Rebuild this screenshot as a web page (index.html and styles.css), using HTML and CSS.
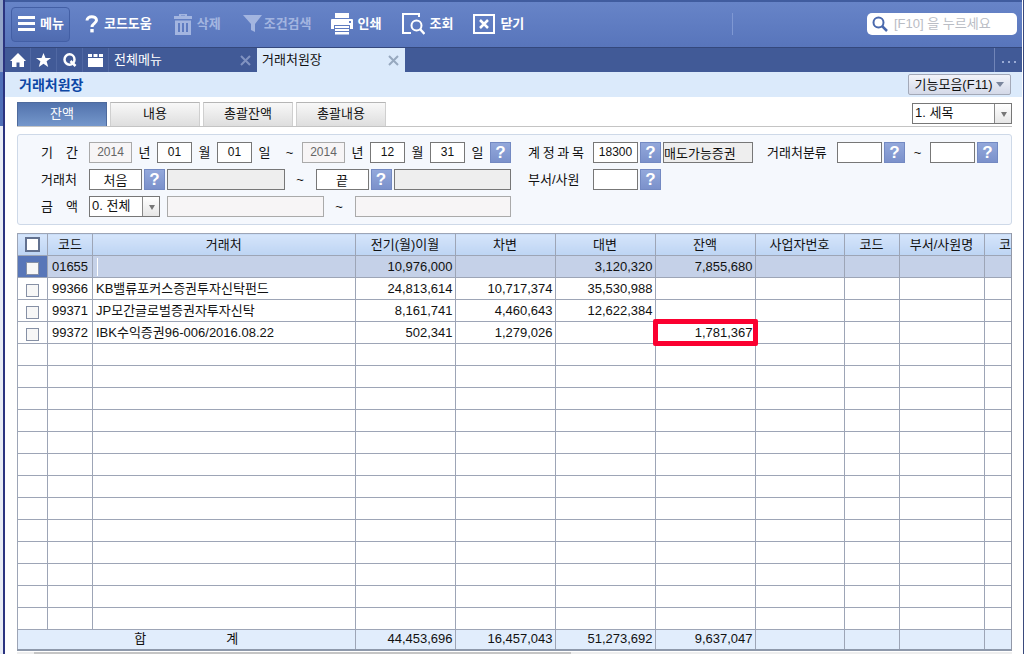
FILE: index.html
```
<!DOCTYPE html>
<html lang="ko">
<head>
    <meta charset="UTF-8">
    <meta name="viewport" content="width=device-width, initial-scale=1.0">
    <title>거래처원장</title>
    <link rel="stylesheet" href="styles.css">
</head>
<body>

    <div class="app">
        <!-- Toolbar -->
        <header class="toolbar">
            <button class="tool-btn menu-btn" type="button">
                <svg width="17" height="16" viewBox="0 0 17 16"><path d="M0 0h17v3H0zM0 6h17v3H0zM0 12h17v3H0z" fill="#fff"/></svg>
                메뉴
            </button>
            <button class="tool-btn help-tool" type="button">
                <svg width="14" height="18" viewBox="0 0 14 18"><path d="M2 5.5C2 0.5 11.5 0.5 11.5 5.3C11.5 8.3 7 8.5 7 12" fill="none" stroke="#fff" stroke-width="3"/><path d="M5.3 14h3.4v3.4H5.3z" fill="#fff"/></svg>
                코드도움
            </button>
            <button class="tool-btn delete-tool" type="button" disabled>
                <svg width="18" height="21" viewBox="0 0 18 21"><path d="M0 2h5V0h8v2h5v3H0zM7 1.5V2h4v-.5zM1 6.500h16V21H1zM4 9v9h2V9zM8 9v9h2V9zM12 9v9h2V9z" fill="#a3b5e0" fill-rule="evenodd"/></svg>
                삭제
            </button>
            <button class="tool-btn filter-tool" type="button" disabled>
                <svg width="19" height="18" viewBox="0 0 19 18"><path d="M0 0h19l-7 9v8l-4-2V9z" fill="#a3b5e0"/></svg>
                조건검색
            </button>
            <button class="tool-btn print-tool" type="button">
                <svg width="22" height="22" viewBox="0 0 22 22"><path d="M4 0h14v5H4zM1 6h20a1 1 0 0 1 1 1v9h-3v-4H3v4H0V7a1 1 0 0 1 1-1zM4 13h14v2H4zM4 16h14v2H4zM4 19h14v2.500H4z" fill="#fff"/><path d="M18 8h2v2h-2z" fill="#5f7cc2"/></svg>
                인쇄
            </button>
            <button class="tool-btn view-tool" type="button">
                <svg width="23" height="22" viewBox="0 0 23 22"><path d="M17 4V1H1v19h8" fill="none" stroke="#fff" stroke-width="2"/><circle cx="14.500" cy="12.500" r="5" fill="none" stroke="#fff" stroke-width="2"/><path d="M18 16l4.500 5" stroke="#fff" stroke-width="2.500"/></svg>
                조회
            </button>
            <button class="tool-btn close-tool" type="button">
                <svg width="22" height="20" viewBox="0 0 22 20"><path d="M1 1h20v18H1z" fill="none" stroke="#fff" stroke-width="2"/><path d="M7 6l8 8M15 6l-8 8" stroke="#fff" stroke-width="2.500"/></svg>
                닫기
            </button>
            <div class="search-area">
                <label class="search">
                    <svg width="16" height="16" viewBox="0 0 16 16"><circle cx="6.500" cy="6.500" r="5" fill="none" stroke="#4a69ad" stroke-width="2"/><path d="M10 10l5 5" stroke="#4a69ad" stroke-width="2.500"/></svg>
                    <input type="text" placeholder="[F10] 을 누르세요" aria-label="메뉴 검색">
                </label>
            </div>
        </header>

        <!-- Window tabs -->
        <nav class="tabs">
            <button class="tab-icon" type="button" aria-label="홈"><svg width="16" height="15" viewBox="0 0 16 15"><path d="M8 0l8 8h-2v6H9.500V9.500h-3V14H2V8H0z" fill="#fff"/></svg></button>
            <button class="tab-icon" type="button" aria-label="즐겨찾기"><svg width="15" height="14" viewBox="0 0 15 14"><path d="M7.500 0l2 5H15l-4.400 3.300L12.200 14 7.500 10.700 2.800 14l1.600-5.700L0 5h5.500z" fill="#fff"/></svg></button>
            <button class="tab-icon" type="button" aria-label="빠른 찾기"><svg width="14" height="14" viewBox="0 0 14 14"><ellipse cx="6.500" cy="6.500" rx="5" ry="5.200" fill="none" stroke="#fff" stroke-width="2.500"/><path d="M7.500 8l5 5" stroke="#fff" stroke-width="2.500"/></svg></button>
            <button class="tab-icon" type="button" aria-label="창 목록"><svg width="15" height="13" viewBox="0 0 15 13"><path d="M0 0h4v3H0zM5.500 0h4v3h-4zM11 0h4v3h-4zM0 4h15v9H0z" fill="#fff"/></svg></button>
            <div class="tab">
                <a href="#">전체메뉴</a>
                <button class="tab-close" type="button" aria-label="전체메뉴 닫기"><svg width="11" height="11" viewBox="0 0 11 11"><path d="M1 1l9 9M10 1l-9 9" stroke="currentColor" stroke-width="2"/></svg></button>
            </div>
            <div class="tab active">
                <a href="#">거래처원장</a>
                <button class="tab-close" type="button" aria-label="거래처원장 닫기"><svg width="11" height="11" viewBox="0 0 11 11"><path d="M1 1l9 9M10 1l-9 9" stroke="currentColor" stroke-width="2"/></svg></button>
            </div>
            <button class="tab-more" type="button" aria-label="더보기"><svg width="14" height="3" viewBox="0 0 14 3"><path d="M0 0h2v2H0zM6 0h2v2H6zM12 0h2v2h-2z" fill="#9aabd4"/></svg></button>
        </nav>

        <div class="title-bar">
            <h1>거래처원장</h1>
            <button class="function-btn" type="button">기능모음(F11) <span class="arrow"></span></button>
        </div>

        <main class="content">
            <div class="sub-tabs">
                <button class="sub-tab selected" type="button">잔액</button>
                <button class="sub-tab" type="button">내용</button>
                <button class="sub-tab" type="button">총괄잔액</button>
                <button class="sub-tab" type="button">총괄내용</button>
                <div class="select item-select">
                    <select aria-label="세목"><option>1. 세목</option></select>
                </div>
            </div>

            <!-- Search conditions -->
            <form class="filter">
                <div class="filter-row">
                    <label class="label" for="year1"><span>기</span><span>간</span></label>
                    <div class="range">
                        <input class="year" id="year1" type="text" value="2014" disabled>
                        <label class="unit" for="year1">년</label>
                        <input class="day" id="month1" type="text" value="01">
                        <label class="unit" for="month1">월</label>
                        <input class="day" id="day1" type="text" value="01">
                        <label class="unit" for="day1">일</label>
                        <span class="unit">~</span>
                        <input class="year" id="year2" type="text" value="2014" disabled>
                        <label class="unit" for="year2">년</label>
                        <input class="day" id="month2" type="text" value="12">
                        <label class="unit" for="month2">월</label>
                        <input class="day" id="day2" type="text" value="31">
                        <label class="unit" for="day2">일</label>
                        <button class="help-btn" type="button">?</button>
                    </div>
                    <label class="label account" for="account"><span>계</span><span>정</span><span>과</span><span>목</span></label>
                    <div class="fields">
                        <input class="code" id="account" type="text" value="18300">
                        <button class="help-btn" type="button">?</button>
                        <input class="account-name" type="text" value="매도가능증권" aria-label="계정과목명" readonly>
                    </div>
                    <label class="label kind" for="kind1">거래처분류</label>
                    <div class="fields">
                        <input class="code" id="kind1" type="text">
                        <button class="help-btn" type="button">?</button>
                    </div>
                    <span class="unit">~</span>
                    <div class="fields">
                        <input class="code" type="text" aria-label="거래처분류 끝">
                        <button class="help-btn" type="button">?</button>
                    </div>
                </div>
                <div class="filter-row">
                    <label class="label" for="client1">거래처</label>
                    <div class="range">
                        <div class="fields grow">
                            <input class="client" id="client1" type="text" value="처음">
                            <button class="help-btn" type="button">?</button>
                            <input class="name" type="text" aria-label="처음 거래처명" readonly>
                        </div>
                        <span class="tilde">~</span>
                        <div class="fields grow">
                            <input class="client" type="text" value="끝" aria-label="끝 거래처">
                            <button class="help-btn" type="button">?</button>
                            <input class="name" type="text" aria-label="끝 거래처명" readonly>
                        </div>
                    </div>
                    <label class="label account" for="dept">부서/사원</label>
                    <div class="fields">
                        <input class="code" id="dept" type="text">
                        <button class="help-btn" type="button">?</button>
                    </div>
                </div>
                <div class="filter-row">
                    <label class="label" for="amount"><span>금</span><span>액</span></label>
                    <div class="range">
                        <div class="select amount-select">
                            <select id="amount"><option>0. 전체</option></select>
                        </div>
                        <input class="amount" type="text" aria-label="금액 시작" disabled>
                        <span class="tilde">~</span>
                        <input class="amount" type="text" aria-label="금액 끝" disabled>
                    </div>
                </div>
            </form>

            <!-- Ledger -->
            <div class="grid">
                <table>
                    <colgroup>
                        <col class="col-check"><col class="col-code"><col>
                        <col class="col-money"><col class="col-money"><col class="col-money"><col class="col-money">
                        <col class="col-number"><col class="col-short"><col class="col-dept"><col class="col-last">
                    </colgroup>
                    <thead>
                        <tr>
                            <th><input type="checkbox" aria-label="전체 선택"></th>
                            <th>코드</th><th>거래처</th><th>전기(월)이월</th><th>차변</th><th>대변</th><th>잔액</th>
                            <th>사업자번호</th><th>코드</th><th>부서/사원명</th><th class="last">코</th>
                        </tr>
                    </thead>
                    <tbody>
                        <tr class="current">
                            <td class="check"><input type="checkbox" aria-label="01655"></td>
                            <td class="center">01655</td><td><span class="caret"></span></td>
                            <td class="money">10,976,000</td><td></td><td class="money">3,120,320</td><td class="money">7,855,680</td>
                            <td></td><td></td><td></td><td></td>
                        </tr>
                        <tr>
                            <td class="check"><input type="checkbox" aria-label="99366"></td>
                            <td class="center">99366</td><td>KB밸류포커스증권투자신탁펀드</td>
                            <td class="money">24,813,614</td><td class="money">10,717,374</td><td class="money">35,530,988</td><td></td>
                            <td></td><td></td><td></td><td></td>
                        </tr>
                        <tr>
                            <td class="check"><input type="checkbox" aria-label="99371"></td>
                            <td class="center">99371</td><td>JP모간글로벌증권자투자신탁</td>
                            <td class="money">8,161,741</td><td class="money">4,460,643</td><td class="money">12,622,384</td><td></td>
                            <td></td><td></td><td></td><td></td>
                        </tr>
                        <tr>
                            <td class="check"><input type="checkbox" aria-label="99372"></td>
                            <td class="center">99372</td><td>IBK수익증권96-006/2016.08.22</td>
                            <td class="money">502,341</td><td class="money">1,279,026</td><td></td><td class="money marked">1,781,367</td>
                            <td></td><td></td><td></td><td></td>
                        </tr>
                        <tr><td></td><td></td><td></td><td></td><td></td><td></td><td></td><td></td><td></td><td></td><td></td></tr>
                        <tr><td></td><td></td><td></td><td></td><td></td><td></td><td></td><td></td><td></td><td></td><td></td></tr>
                        <tr><td></td><td></td><td></td><td></td><td></td><td></td><td></td><td></td><td></td><td></td><td></td></tr>
                        <tr><td></td><td></td><td></td><td></td><td></td><td></td><td></td><td></td><td></td><td></td><td></td></tr>
                        <tr><td></td><td></td><td></td><td></td><td></td><td></td><td></td><td></td><td></td><td></td><td></td></tr>
                        <tr><td></td><td></td><td></td><td></td><td></td><td></td><td></td><td></td><td></td><td></td><td></td></tr>
                        <tr><td></td><td></td><td></td><td></td><td></td><td></td><td></td><td></td><td></td><td></td><td></td></tr>
                        <tr><td></td><td></td><td></td><td></td><td></td><td></td><td></td><td></td><td></td><td></td><td></td></tr>
                        <tr><td></td><td></td><td></td><td></td><td></td><td></td><td></td><td></td><td></td><td></td><td></td></tr>
                        <tr><td></td><td></td><td></td><td></td><td></td><td></td><td></td><td></td><td></td><td></td><td></td></tr>
                        <tr><td></td><td></td><td></td><td></td><td></td><td></td><td></td><td></td><td></td><td></td><td></td></tr>
                        <tr><td></td><td></td><td></td><td></td><td></td><td></td><td></td><td></td><td></td><td></td><td></td></tr>
                        <tr><td></td><td></td><td></td><td></td><td></td><td></td><td></td><td></td><td></td><td></td><td></td></tr>
                    </tbody>
                    <tfoot>
                        <tr>
                            <td colspan="3"><div class="total"><span>합</span><span>계</span></div></td>
                            <td class="money">44,453,696</td><td class="money">16,457,043</td><td class="money">51,273,692</td><td class="money">9,637,047</td>
                            <td></td><td></td><td></td><td></td>
                        </tr>
                    </tfoot>
                </table>
            </div>
            <div class="scroll-track"><div class="scroll-thumb"></div></div>
        </main>
    </div>

</body>
</html>
```
FILE: styles.css
```
* {
    box-sizing: border-box;
}

body {
    margin: 0;
    font-family: "Liberation Sans", "Noto Sans CJK KR", sans-serif;
    font-size: 13px;
    line-height: 16px;
    color: #111;
    background: #fff;
    overflow: hidden;
}

button, input, select {
    font: inherit;
    color: inherit;
    margin: 0;
    padding: 0;
    border-radius: 0;
}

button {
    border: none;
    background: none;
    white-space: nowrap;
}

svg {
    display: block;
    flex: none;
}

/* The strip on the left is the edge of the window behind */
.app {
    min-height: 100vh;
    padding: 0 2px 0 5px;
    background:
        linear-gradient(#3a4a7c, #3a4a7c) right / 1px 100% no-repeat,
        linear-gradient(#2b3480, #2b3480) 3px 0 / 2px 100% no-repeat,
        linear-gradient(#93a5c9 72px, #5070b8 72px, #5070b8 126px, #e9edf6 126px) left / 3px 100% no-repeat,
        #fff;
}

/* Toolbar */
.toolbar {
    display: flex;
    align-items: center;
    height: 48px;
    padding: 0 5px 1px 6px;
    color: #fff;
    font-weight: bold;
    background: linear-gradient(#6784c8, #5875bb);
    border-top: 2px solid #405c9f;
    border-bottom: 1px solid #34487c;
}

.tool-btn {
    display: flex;
    align-items: center;
    gap: 5px;
}

.tool-btn:disabled {
    color: #a3b5e0;
}

.menu-btn {
    height: 35px;
    padding: 0 5px 0 6px;
    border: 1px solid #435fa5;
    border-radius: 4px;
    background: linear-gradient(#6280c5, #4f6bb0);
}

.help-tool { margin-left: 15px; }
.delete-tool { margin-left: 22px; }
.filter-tool { margin-left: 22px; gap: 2px; }
.print-tool { margin-left: 19px; }
.view-tool { margin-left: 21px; gap: 4px; }
.close-tool { margin-left: 20px; }

.search-area {
    display: flex;
    align-items: center;
    justify-content: flex-end;
    width: 285px;
    height: 22px;
    margin-left: auto;
    border-left: 1px solid #7f98d3;
}

.search {
    display: flex;
    align-items: center;
    gap: 6px;
    width: 150px;
    height: 22px;
    padding: 0 5px;
    background: #fff;
    border-radius: 5px;
}

.search input {
    width: 100%;
    min-width: 0;
    border: none;
    outline: none;
    background: none;
    font-weight: normal;
    color: #333;
}

.search input::placeholder {
    color: #b9bcc4;
}

/* Window tabs */
.tabs {
    display: flex;
    height: 24px;
    background: #415a97;
}

.tab-icon {
    display: flex;
    align-items: center;
    justify-content: center;
    width: 26px;
    border-right: 1px solid #5068a3;
}

.tab {
    display: flex;
    align-items: center;
    justify-content: space-between;
    width: 148px;
    padding: 0 6px 0 5px;
    color: #fff;
}

.tab a {
    color: inherit;
    text-decoration: none;
}

.tab-close {
    color: #8193c1;
}

.tab.active {
    color: #111;
    background: #dbeafb;
}

.tab.active .tab-close {
    color: #97a9bf;
}

.tab-more {
    display: flex;
    align-items: center;
    justify-content: center;
    width: 28px;
    margin-left: auto;
    padding-top: 4px;
    border-left: 1px solid #7185b8;
}

.title-bar {
    display: flex;
    align-items: center;
    justify-content: space-between;
    height: 25px;
    padding: 0 11px 0 14px;
    background: #dbeafb;
}

h1 {
    margin: 0;
    font-size: 14px;
    line-height: 18px;
    color: #0d47a5;
}

.function-btn {
    display: flex;
    align-items: center;
    justify-content: center;
    gap: 4px;
    width: 103px;
    height: 21px;
    border: 1px solid #a3a9b8;
    border-radius: 2px;
    background: linear-gradient(#f2f4fa, #d4d9e8);
}

.arrow {
    border: 4px solid transparent;
    border-top: 5px solid #7a859c;
    border-bottom: none;
}

/* Content */
.content {
    padding: 5px 10px 0 12px;
}

.sub-tabs {
    display: flex;
    gap: 3px;
    height: 25px;
    border-bottom: 1px solid #c4c4c4;
}

.sub-tab {
    width: 90px;
    padding-bottom: 2px;
    border: 1px solid #cfcfcf;
    border-top-color: #b5b5b5;
    border-bottom: none;
    background: linear-gradient(#f8f8f8, #dedede);
}

.sub-tab.selected {
    color: #fff;
    border-color: #4e6a9c;
    background: linear-gradient(#5273ad, #7597cb);
}

.select {
    position: relative;
    height: 21px;
}

.select select {
    display: block;
    width: 100%;
    height: 100%;
    padding: 0 18px 2px 2px;
    border: 1px solid #777;
    background: #fff;
    appearance: none;
}

/* Drop-down button drawn over the right end of the select */
.select::before {
    content: "";
    position: absolute;
    top: 1px;
    right: 1px;
    bottom: 1px;
    width: 16px;
    border-left: 1px solid #888;
    background: linear-gradient(#fff, #e6e6e6);
    pointer-events: none;
}

.select::after {
    content: "";
    position: absolute;
    top: 9px;
    right: 5px;
    border: 3px solid transparent;
    border-top: 5px solid #777;
    border-bottom: none;
    pointer-events: none;
}

.item-select {
    width: 100px;
    margin: 1px 0 0 auto;
}

/* Search conditions */
.filter {
    display: flex;
    flex-direction: column;
    gap: 6px;
    margin: 7px 0 8px;
    padding: 7px 0 7px 23px;
    border: 1px solid #ced9e8;
    border-radius: 3px;
    background: #f5f8fd;
}

.filter-row {
    display: flex;
    align-items: center;
    height: 21px;
}

.label {
    display: flex;
    justify-content: space-between;
    width: 48px;
    padding-right: 11px;
    white-space: nowrap;
}

.label.account {
    width: 82px;
    padding: 0 9px 0 17px;
}

.label.kind {
    width: 84px;
    padding: 0 0 0 14px;
}

.range {
    display: flex;
    align-items: center;
    width: 422px;
}

.fields {
    display: flex;
    gap: 2px;
}

.grow {
    flex: 1;
    min-width: 0;
}

.unit {
    width: 25px;
    text-align: center;
}

.tilde {
    width: 31px;
    text-align: center;
}

.filter input {
    height: 21px;
    min-width: 0;
    padding-bottom: 1px;
    border: 1px solid #777;
    background: #fff;
    text-align: center;
}

.filter input:read-only {
    background: #eee;
}

.filter input:disabled {
    color: #666;
    border-color: #aaa;
    background: #f7f5f6;
}

.filter .year,
.filter .day,
.filter .code {
    font-size: 12px;
}

.filter .year { width: 43px; }
.filter .day { width: 35px; }
.filter .code { width: 45px; }
.filter .client { width: 53px; }
.filter .name { flex: 1; }
.filter .amount { flex: 1; }

.filter .account-name {
    width: 90px;
    text-align: left;
}

.amount-select {
    width: 71px;
    margin-right: 7px;
}

.help-btn {
    width: 21px;
    height: 21px;
    font-size: 17px;
    line-height: 19px;
    font-weight: bold;
    color: #fff;
    border: 1px solid #7389c2;
    background: linear-gradient(#93a8db, #7b91cb);
}

/* Ledger */
.grid {
    overflow: hidden;
    border-right: 1px solid #9298a8;
}

table {
    width: 100%;
    table-layout: fixed;
    border-collapse: collapse;
}

.col-check { width: 30px; }
.col-code { width: 45px; }
.col-money { width: 100px; }
.col-number { width: 89px; }
.col-short { width: 55px; }
.col-dept { width: 85px; }
.col-last { width: 27px; }

th, td {
    height: 22px;
    padding: 0 3px;
    border: 1px solid #9da5b6;
    white-space: nowrap;
}

th {
    font-weight: normal;
    padding: 0;
    background: linear-gradient(#d5e5fb, #bdd4f3);
}

th.last {
    text-align: right;
}

th:last-child, td:last-child {
    border-right: none;
}

.center {
    text-align: center;
    padding: 0;
}

.money {
    text-align: right;
    padding-right: 2px;
}

.check {
    padding: 3px 0 0;
    text-align: center;
}

.grid input {
    display: block;
    width: 13px;
    height: 13px;
    margin: 0 auto;
    border: 1px solid #8690a5;
    background: #f7f7f7;
    appearance: none;
}

.grid th input {
    width: 15px;
    height: 15px;
    border: 2px solid #62718f;
    background: #fff;
}

.current td {
    background: #c5d1e8;
}

.current td.check {
    background: #5876b8;
}

.caret {
    display: block;
    width: 1px;
    height: 18px;
    margin-left: 1px;
    background: #fff;
}

.marked {
    position: relative;
}

.marked::after {
    content: "";
    position: absolute;
    inset: -3px;
    border: 5px solid #fb0030;
    border-radius: 2px;
}

tfoot td {
    height: 20px;
    background: #e1edfc;
    border-bottom: 2px solid #8e99ab;
}

.total {
    display: flex;
    justify-content: center;
    gap: 80px;
}

.scroll-track {
    margin-top: 1px;
    height: 6px;
    background: #eee;
}

.scroll-thumb {
    width: 54%;
    height: 6px;
    margin-left: 17px;
    background: #c5c5c5;
}
```
